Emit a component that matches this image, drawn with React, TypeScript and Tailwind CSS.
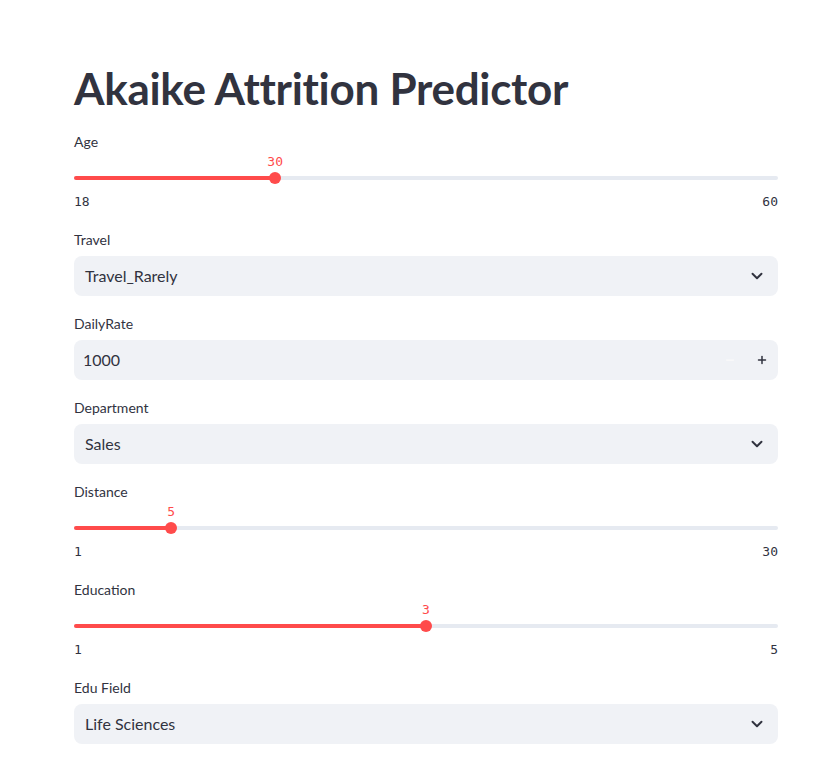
import React from 'react';
import { ChevronDown, Minus, Plus } from 'lucide-react';

const sans = "font-['Lato','Noto_Sans',sans-serif]";
const mono = "font-['DejaVu_Sans_Mono','Liberation_Mono',monospace]";

const Label: React.FC<{ text: string }> = ({ text }) => (
  <div className={`h-6 mb-1 text-[14px] leading-6 text-[#31333f] ${sans}`}>{text}</div>
);

const Slider: React.FC<{ label: string; min: number; max: number; value: number }> = ({ label, min, max, value }) => {
  const pct = ((value - min) / (max - min)) * 100;
  return (
    <div>
      <Label text={label} />
      <div className="h-[54px]">
        <div className="relative h-[34px]">
          <div className="absolute left-0 right-0 top-[18px] h-1 rounded-full bg-[#e6eaf1]" />
          <div className="absolute left-0 top-[18px] h-1 rounded-full bg-[#ff4b4b]" style={{ width: `${pct}%` }} />
          <div className="absolute top-[14px] -ml-1.5 h-3 w-3 rounded-full bg-[#ff4b4b]" style={{ left: `${pct}%` }} />
          <div
            className={`absolute top-[-6px] -translate-x-1/2 text-[13px] leading-5 text-[#ff4b4b] ${mono}`}
            style={{ left: `${pct}%` }}
          >
            {value}
          </div>
        </div>
        <div className={`flex justify-between pr-px text-[13px] leading-5 text-[#31333f] ${mono}`}>
          <span>{min}</span>
          <span className="-mr-px">{max}</span>
        </div>
      </div>
    </div>
  );
};

const Select: React.FC<{ label: string; value: string }> = ({ label, value }) => (
  <div>
    <Label text={label} />
    <div className={`flex h-10 items-center justify-between rounded-lg bg-[#f0f2f6] pl-[11px] pr-[12px] text-[16px] text-[#31333f] ${sans}`}>
      <span>{value}</span>
      <ChevronDown size={18} strokeWidth={2.6} className="text-[#31333f]" />
    </div>
  </div>
);

const NumberInput: React.FC<{ label: string; value: number }> = ({ label, value }) => (
  <div>
    <Label text={label} />
    <div className={`flex h-10 items-center rounded-lg bg-[#f0f2f6] pl-[9px] text-[16px] text-[#31333f] ${sans}`}>
      <span className="flex-1">{value}</span>
      <div className="flex h-full items-center">
        <div className="flex h-full w-8 items-center justify-center text-[#fafafa]">
          <Minus size={12} strokeWidth={2.5} />
        </div>
        <div className="flex h-full w-8 items-center justify-center text-[#31333f]">
          <Plus size={12} strokeWidth={3} />
        </div>
      </div>
    </div>
  </div>
);

export default function App() {
  return (
    <main className="min-h-screen bg-white">
      <div className="ml-[74px] flex w-[704px] flex-col gap-4 pt-[62px] pb-10">
        <h1 className={`h-[52px] text-[44px] font-bold leading-[52px] tracking-[-0.3px] text-[#31333f] ${sans}`}>
          Akaike Attrition Predictor
        </h1>
        <Slider label="Age" min={18} max={60} value={30} />
        <Select label="Travel" value="Travel_Rarely" />
        <NumberInput label="DailyRate" value={1000} />
        <Select label="Department" value="Sales" />
        <Slider label="Distance" min={1} max={30} value={5} />
        <Slider label="Education" min={1} max={5} value={3} />
        <Select label="Edu Field" value="Life Sciences" />
      </div>
    </main>
  );
}
